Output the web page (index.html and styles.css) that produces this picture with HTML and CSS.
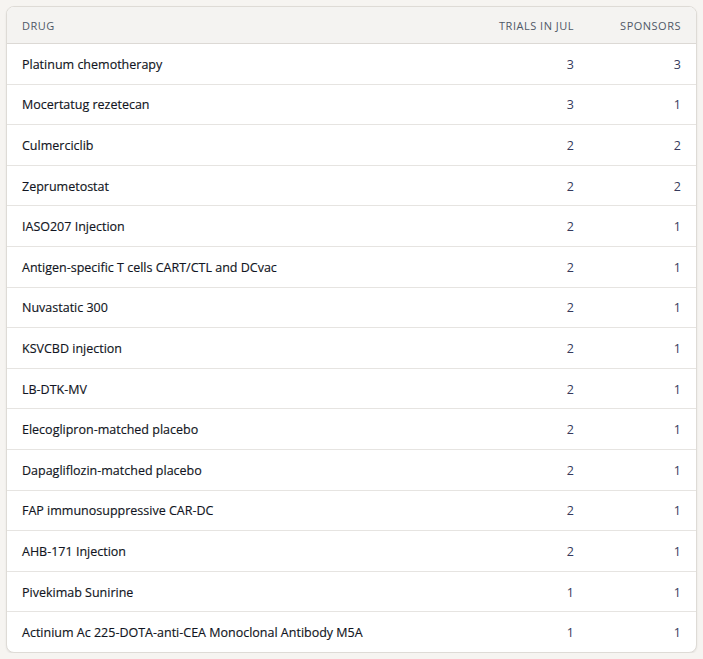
FILE: index.html
```html
<!DOCTYPE html>
<html>
<head>
<meta charset="utf-8">
<link rel="stylesheet" href="styles.css">
</head>
<body>
<div class="card">
<table class="tbl">
<thead>
<tr><th class="c-drug">Drug</th><th class="c-num c-trials">Trials in Jul</th><th class="c-num c-spons">Sponsors</th></tr>
</thead>
<tbody>
<tr><td class="c-drug">Platinum chemotherapy</td><td class="c-num">3</td><td class="c-num">3</td></tr>
<tr><td class="c-drug">Mocertatug rezetecan</td><td class="c-num">3</td><td class="c-num">1</td></tr>
<tr><td class="c-drug">Culmerciclib</td><td class="c-num">2</td><td class="c-num">2</td></tr>
<tr><td class="c-drug">Zeprumetostat</td><td class="c-num">2</td><td class="c-num">2</td></tr>
<tr><td class="c-drug">IASO207 Injection</td><td class="c-num">2</td><td class="c-num">1</td></tr>
<tr><td class="c-drug">Antigen-specific T cells CART/CTL and DCvac</td><td class="c-num">2</td><td class="c-num">1</td></tr>
<tr><td class="c-drug">Nuvastatic 300</td><td class="c-num">2</td><td class="c-num">1</td></tr>
<tr><td class="c-drug">KSVCBD injection</td><td class="c-num">2</td><td class="c-num">1</td></tr>
<tr><td class="c-drug">LB-DTK-MV</td><td class="c-num">2</td><td class="c-num">1</td></tr>
<tr><td class="c-drug">Elecoglipron-matched placebo</td><td class="c-num">2</td><td class="c-num">1</td></tr>
<tr><td class="c-drug">Dapagliflozin-matched placebo</td><td class="c-num">2</td><td class="c-num">1</td></tr>
<tr><td class="c-drug">FAP immunosuppressive CAR-DC</td><td class="c-num">2</td><td class="c-num">1</td></tr>
<tr><td class="c-drug">AHB-171 Injection</td><td class="c-num">2</td><td class="c-num">1</td></tr>
<tr><td class="c-drug">Pivekimab Sunirine</td><td class="c-num">1</td><td class="c-num">1</td></tr>
<tr><td class="c-drug">Actinium Ac 225-DOTA-anti-CEA Monoclonal Antibody M5A</td><td class="c-num">1</td><td class="c-num">1</td></tr>
</tbody>
</table>
</div>
</body>
</html>
```

FILE: styles.css
```css
html, body {
  margin: 0;
  padding: 0;
  background: #f6f4f1;
}
body {
  padding: 6px 6px 0 6px;
  font-family: "Open Sans", "Noto Sans", sans-serif;
}
.card {
  background: #ffffff;
  border: 1px solid #dedbd6;
  border-radius: 8px;
  overflow: hidden;
  box-shadow: 0 1px 2px rgba(0,0,0,0.08);
}
.tbl {
  width: 100%;
  border-collapse: collapse;
  table-layout: fixed;
}
.tbl th {
  background: #f4f3f1;
  color: #4f5867;
  font-size: 11px;
  font-weight: 400;
  text-transform: uppercase;
  letter-spacing: 0.5px;
  height: 35px;
  padding: 1px 15px 0 15px;
  border-bottom: 1px solid #dcd9d5;
  text-align: left;
}
.tbl td {
  height: 38.6px;
  padding: 1px 15px 0 15px;
  font-size: 12.5px;
  border-bottom: 1px solid #e6e4e1;
  color: #111522;
  -webkit-text-stroke: 0.15px #111522;
}
.tbl tbody tr:last-child td {
  border-bottom: none;
}
.tbl td.c-num {
  text-align: right;
  color: #363a5c;
  -webkit-text-stroke: 0;
}
.tbl th.c-num {
  text-align: right;
}
.c-trials {
  width: 130px;
}
.c-spons {
  width: 77px;
}
```
